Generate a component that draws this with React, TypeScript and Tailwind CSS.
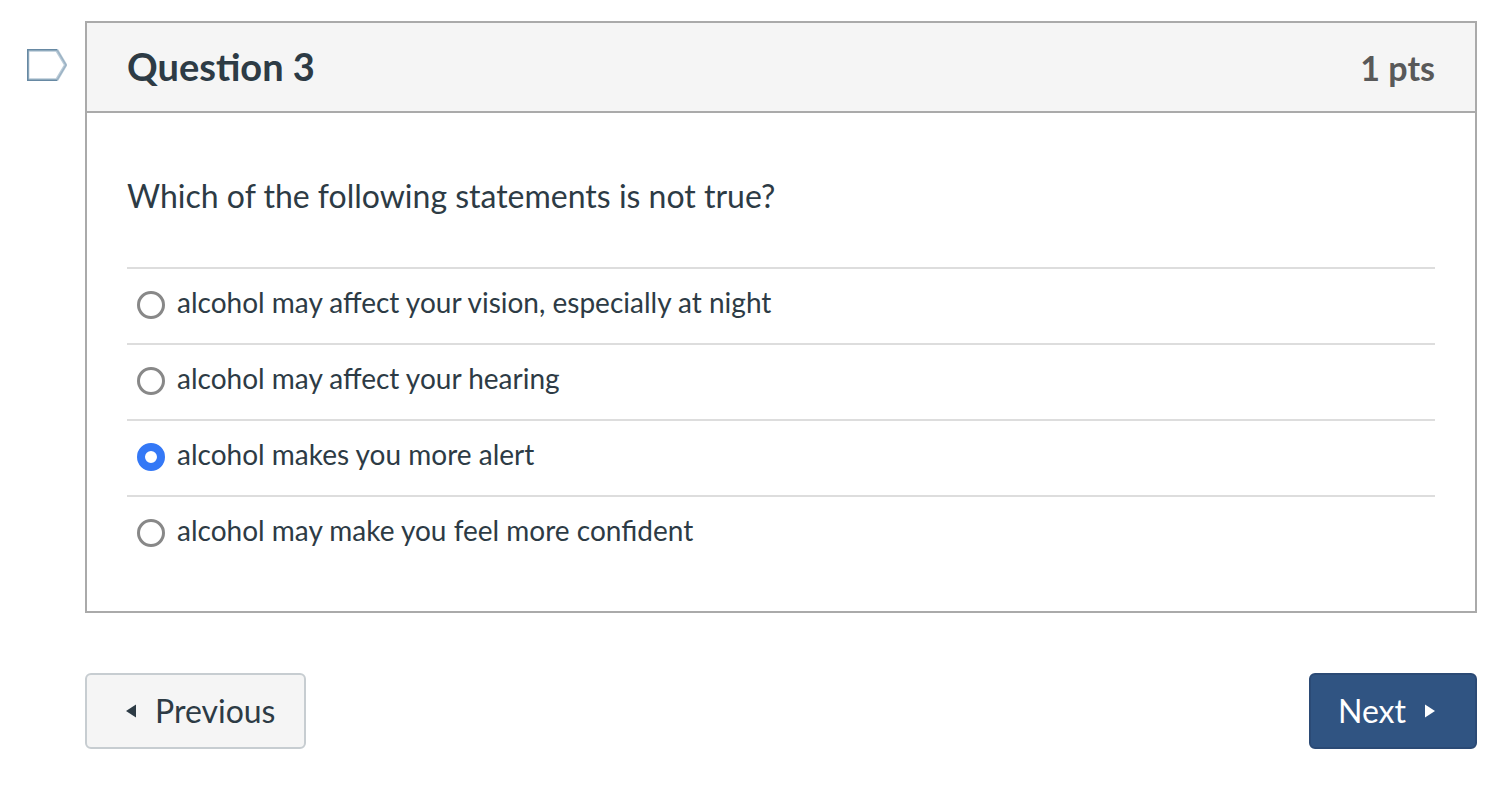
import { useState } from "react";

const answers = [
  "alcohol may affect your vision, especially at night",
  "alcohol may affect your hearing",
  "alcohol makes you more alert",
  "alcohol may make you feel more confident",
];

function FlagButton() {
  const [flagged, setFlagged] = useState(false);
  return (
    <button type="button" aria-label="Flag question" aria-pressed={flagged} onClick={() => setFlagged(!flagged)} className="mt-7 h-8 w-10 shrink-0">
      <svg viewBox="0 0 40 32" className="block h-8 w-10">
        <path d="M0 0H31L40.5 16L31 32H0Z" fill="#b9cad7" />
        <path d="M2.4 2.8H28.8L36.8 16L28.8 29.2H2.4Z" fill={flagged ? "#f5d565" : "#ffffff"} />
        <path d="M30 .8H.8V31.2H30" fill="none" stroke="#6789a3" strokeWidth="1.6" />
        <path d="M30 .8L39 16L30 31.2" fill="none" stroke="#9bb2c4" strokeWidth="1.4" />
      </svg>
    </button>
  );
}

export default function App() {
  const [selected, setSelected] = useState(2);
  return (
    <main className="flex items-start bg-white pt-[21px] pr-[34px] pl-[27px] font-['Lato',sans-serif] text-[#2d3b45]">
      <FlagButton />
      <div className="ml-[18px] min-w-0 flex-1">
        <section className="border-2 border-[#aaaaaa]">
          <header className="flex items-baseline justify-between border-b-2 border-[#aaaaaa] bg-[#f5f5f5] px-10 py-[19px]">
            <h1 className="text-[38px] leading-12 font-bold">Question 3</h1>
            <span className="text-[34px] leading-12 font-bold text-[#595959]">1 pts</span>
          </header>
          <div className="px-10 pt-[59px] pb-10">
            <fieldset>
              <legend className="text-[32px] leading-12">Which of the following statements is not true?</legend>
              <div className="mt-[47px]">
                {answers.map((answer, index) => (
                  <label key={answer} className="flex h-[76px] items-start gap-3 border-t-2 border-[#dddddd] pt-[13px] pl-[10px] text-[28px] leading-10">
                    <input
                      type="radio"
                      name="answer"
                      checked={selected === index}
                      onChange={() => setSelected(index)}
                      className="mt-[9px] size-7 shrink-0 appearance-none rounded-full border-3 border-[#888888] bg-white checked:border-8 checked:border-[#3478f6]"
                    />
                    <span>{answer}</span>
                  </label>
                ))}
              </div>
            </fieldset>
          </div>
        </section>
        <nav aria-label="Questions" className="mt-15 flex justify-between text-[32px] leading-12">
          <button type="button" className="flex items-center gap-[19px] rounded-md border-2 border-[#c7cdd1] bg-[#f5f5f5] py-3 pr-[29px] pl-[39px]">
            <svg viewBox="0 0 10 14" className="h-[14px] w-[10px]" fill="currentColor"><path d="M10 .5V13.5L0 7Z" /></svg>
            Previous
          </button>
          <button type="button" className="flex items-center gap-[19px] rounded-md border-2 border-[#2b4a75] bg-[#305482] py-3 pr-10 pl-[27px] text-white">
            Next
            <svg viewBox="0 0 10 14" className="h-[14px] w-[10px]" fill="currentColor"><path d="M0 .5V13.5L10 7Z" /></svg>
          </button>
        </nav>
      </div>
    </main>
  );
}
